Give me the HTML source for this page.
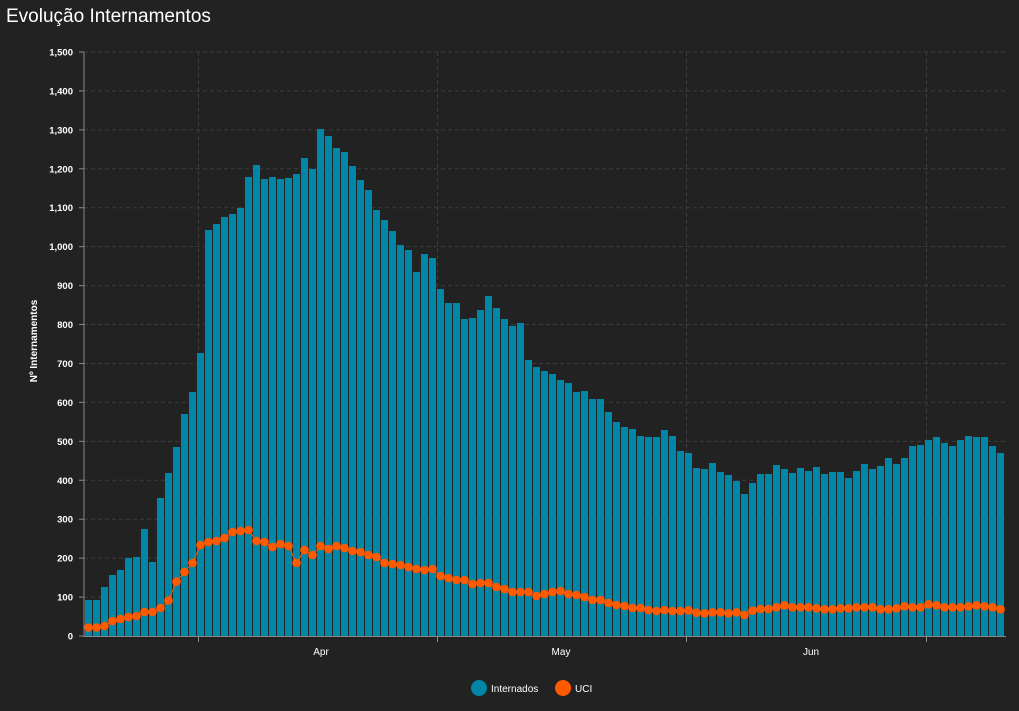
<!DOCTYPE html>
<html><head><meta charset="utf-8"><style>
html,body{margin:0;padding:0;background:#222;width:1019px;height:711px;overflow:hidden;font-family:"Liberation Sans",sans-serif}
</style></head><body>
<svg id="c" width="1019" height="711" xmlns="http://www.w3.org/2000/svg" style="position:absolute;left:0;top:0">
<rect width="1019" height="711" fill="#222"/>
<text x="6" y="22" fill="#fff" font-size="19" font-family="Liberation Sans, sans-serif">Evolução Internamentos</text>
<g id="grid"></g>
<g id="bars"></g>
<g id="uci"></g>
<text transform="translate(37,341) rotate(-90)" fill="#fff" font-size="10" font-weight="bold" text-anchor="middle">Nº Internamentos</text>
<line x1="84" y1="52" x2="84" y2="636" stroke="#888" stroke-width="1"/>
<line x1="84" y1="636.5" x2="1006" y2="636.5" stroke="#888" stroke-width="1"/>
<g fill="#fff" font-size="10" text-anchor="middle">
<text x="321" y="655">Apr</text><text x="561" y="655">May</text><text x="811" y="655">Jun</text>
</g>
<circle cx="479" cy="688" r="8" fill="#0087a8"/>
<text x="491" y="692" fill="#fff" font-size="10">Internados</text>
<circle cx="563" cy="688" r="8" fill="#ff5a00"/>
<text x="575" y="692" fill="#fff" font-size="10">UCI</text>
</svg>
<script>
var NS="http://www.w3.org/2000/svg";
function el(n,a,p){var e=document.createElementNS(NS,n);for(var k in a)e.setAttribute(k,a[k]);document.getElementById(p).appendChild(e);return e;}
var g="grid";
for(var i=0;i<=15;i++){var y=636-i*584/15;
 if(i>0)el("line",{x1:84,x2:1006,y1:y,y2:y,stroke:"#3c3c3c","stroke-dasharray":"4,3"},g);
 var t=el("text",{x:73,y:y+3.5,fill:"#fff","font-size":"9.5","text-anchor":"end","font-weight":"bold"},g);
 var v=i*100;t.textContent=v>=1000?Math.floor(v/1000)+","+String(v%1000).padStart(3,"0"):v;
 el("line",{x1:79,x2:84,y1:y,y2:y,stroke:"#888"},g);}
[198,437,686,926].forEach(function(x){el("line",{x1:x+.5,x2:x+.5,y1:52,y2:636,stroke:"#3c3c3c","stroke-dasharray":"4,3"},g);el("line",{x1:x+.5,x2:x+.5,y1:636,y2:642,stroke:"#888"},g);});
var tops=[600,600,587,575,570,558,557,529,562,498,473,447,414,392,353,230,224,217,214,208,177,165,179,177,179,178,174,158,169,129,136,148,152,166,180,190,210,220,231,245,250,272,254,258,289,303,303,319,318,310,296,308,319,326,323,360,367,371,374,380,383,392,391,399,399,412,422,427,429,436,437,437,430,436,451,453,468,469,463,472,475,481,494,483,474,474,465,469,473,468,471,467,474,472,472,478,471,464,469,466,458,464,458,446,445,440,437,443,446,440,436,437,437,446,453];
var d0=[627.5,627.5,626,621,619,617,616,612,612,608,600.5,581.6,572,563,545,542,541,538,532,531,530,541,542,547,544,546,563,550,555,546,549,546,548,551,552,555,557,563];
var d1=[564,565,567,569,570,569,576,578,580,580,584,583,583,587,589,592,592,592,596,594,592,591,594,595,597,600,600,603,605,606,608,608,610,611,610,611,611];
var z3=[631,638,640,637,637,640,637,645,632,627,627,622,616,622,622,622,625,628,628,625,625,622,622,622,628,628,625,619,622,622,613,616,622,622,622,619,616,619,622,628];
var dots=d0.concat(d1,z3.map(function(v){return 400+v/3;}));
tops.forEach(function(t,i){el("rect",{x:85+8*i,y:t,width:7,height:636-t,fill:"#0087a8"},"bars");});
var pts=dots.map(function(y,i){return (88.5+8*i)+","+y;}).join(" ");
el("polyline",{points:pts,fill:"none",stroke:"#ff5a00","stroke-width":1},"uci");
dots.forEach(function(y,i){el("circle",{cx:88.5+8*i,cy:y,r:4.3,fill:"#ff5a00"},"uci");});
</script>
</body></html>
